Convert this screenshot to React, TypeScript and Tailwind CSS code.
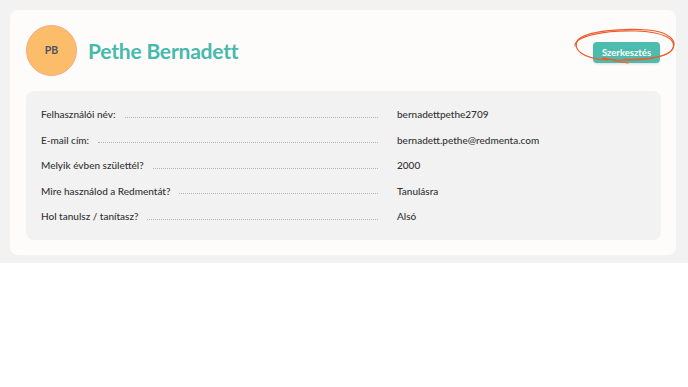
const rows = [
    {label: "Felhasználói név:", value: "bernadettpethe2709"},
    {label: "E-mail cím:", value: "bernadett.pethe@redmenta.com"},
    {label: "Melyik évben születtél?", value: "2000"},
    {label: "Mire használod a Redmentát?", value: "Tanulásra"},
    {label: "Hol tanulsz / tanítasz?", value: "Alsó"},
];

const Scribble = () => (
    <svg
        className="absolute left-[-21px] top-[-11px] pointer-events-none"
        width="104"
        height="38"
        viewBox="0 0 104 38"
        fill="none"
    >
        <path
            d="M36 33 C 10 32, 0 22, 6 13 C 14 4, 50 1, 76 3 C 98 5, 106 14, 100 23 C 94 31, 70 34, 46 33 C 40 33, 36 32, 30 31"
            stroke="#f05a2a"
            strokeWidth="1.2"
            strokeLinecap="round"
        />
        <path
            d="M3 19 C 2 9, 34 3, 64 4 C 92 5, 104 12, 101 21 C 98 30, 74 33, 52 32"
            stroke="#f05a2a"
            strokeWidth="1.1"
            strokeLinecap="round"
        />
        <path
            d="M32 31 C 40 33, 48 35, 56 36"
            stroke="#f05a2a"
            strokeWidth="1"
            strokeLinecap="round"
        />
    </svg>
);

const App = () => {
    return (
        <div className="w-[688px] min-h-[387px] bg-white font-['Lato',sans-serif]">
            <div className="bg-[#f2f2f2] h-[263px] pl-[10px] pr-[12px] pt-[10px]">
                <div className="bg-[#fdfcfa] rounded-[8px] h-[245px] px-[15px] pl-[16px] pt-[15px]">

                    <div className="flex items-center h-[51px]">
                        <div className="w-[51px] h-[51px] rounded-full bg-[#fbbd6a] border border-[#f8a886] flex items-center justify-center">
                            <span className="text-[10.5px] font-bold text-[#4d5166]">PB</span>
                        </div>
                        <h1 className="ml-[11px] text-[21px] font-bold text-[#48b9ad] leading-none tracking-[-0.2px]">
                            Pethe Bernadett
                        </h1>
                        <div className="ml-auto mr-px relative">
                            <button
                                className="h-[21px] w-[67px] rounded-[4px] bg-[#4dbcae] text-white text-[9.5px] font-bold shadow-sm"
                            >
                                Szerkesztés
                            </button>
                            <Scribble/>
                        </div>
                    </div>

                    <div className="mt-[15px] bg-[#f2f2f2] rounded-[8px] pt-[11px] pb-[10px] pl-[15px]">
                        {rows.map((row) => (
                            <div key={row.label} className="flex items-center h-[25.5px] text-[10px] text-[#333333] font-medium">
                                <div className="w-[346px] flex items-center">
                                    <span className="whitespace-nowrap">{row.label}</span>
                                    <span className="flex-1 mx-[9px] mt-[5px] border-b border-dotted border-[#b5b5b5]"></span>
                                </div>
                                <span className="ml-[10px]">{row.value}</span>
                            </div>
                        ))}
                    </div>

                </div>
            </div>
        </div>
    );
}

export default App;
